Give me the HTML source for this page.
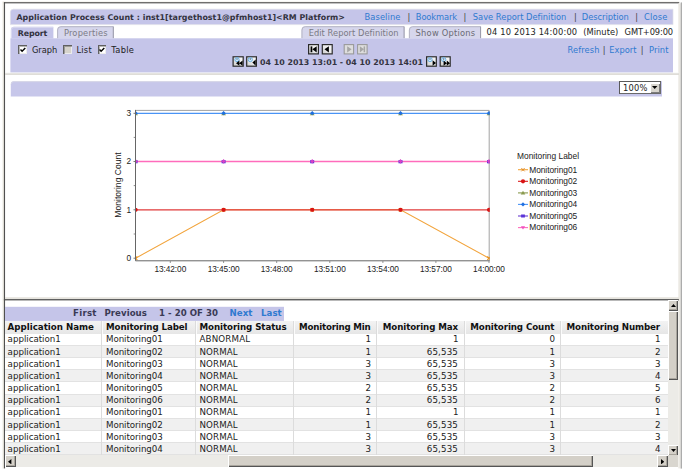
<!DOCTYPE html>
<html lang="en">
<head>
<meta charset="utf-8">
<title>Application Process Count</title>
<style>
html,body{margin:0;padding:0;background:#fff;}
body{width:685px;height:472px;position:relative;overflow:hidden;font-family:"DejaVu Sans","Liberation Sans",sans-serif;color:#222;}
.a{position:absolute;}
.t{position:absolute;white-space:pre;line-height:1em;color:#222;}
.c{font-family:"Liberation Sans",sans-serif;}
.lav{background:#c5c5e9;}
.tab{position:absolute;top:26px;height:12.3px;background:#d7d7ed;border-radius:4px 0 0 0;box-shadow:inset 0 1px 0 #b4b4c2, inset 1px 0 0 #e6e6f2, inset -1px 0 0 #9c9cab;}
.cb{position:absolute;top:45.2px;width:8.6px;height:8.6px;background:#fff;box-shadow:inset 1px 1px 0 #606060, inset 2px 2px 0 rgba(70,70,70,.4), inset -1px -1px 0 #ececec;}
.nb{position:absolute;width:9px;height:8.6px;border:1px solid #111;background:#f4f4f4;}
.nb.d{border-color:#8c8c8c;background:#dcdcdc;}
.ib{position:absolute;top:56px;width:9px;height:8.8px;border:1px solid #111;background:#eef1f4;}
.sb{background:#d4d0c8;position:absolute;box-shadow:inset 1px 1px 0 #fff, inset -1px -1px 0 #555, inset -2px -2px 0 #a9a59d;}
.trk{position:absolute;background:#ecebe7;}
</style>
</head>
<body>
<!-- frame chrome, separators, lavender blocks -->
<svg class="a" style="left:0;top:0" width="685" height="472" viewBox="0 0 685 472">
<rect x="2.5" y="1.6" width="2" height="467" fill="#eeebe4"/>
<rect x="2.5" y="1.6" width="677" height="1.2" fill="#eeebe4"/>
<rect x="3.9" y="2.2" width="1.15" height="466.2" fill="#505050"/>
<rect x="3.9" y="2.2" width="675.3" height="1.15" fill="#505050"/>
<rect x="678.3" y="3.4" width="2.4" height="465" fill="#ebe9e3"/>
<rect x="680.7" y="2.4" width="1.2" height="466.2" fill="#a4a4a4"/>
<!-- separators -->
<rect x="5" y="72.6" width="674" height="0.8" fill="#f6f5f2"/>
<rect x="5" y="73.3" width="674" height="1.6" fill="#dcdad4"/>
<rect x="5" y="297.2" width="674" height="1.9" fill="#e6e4de"/>
<rect x="3.9" y="299.1" width="675" height="1.3" fill="#505050"/>
<!-- title bar -->
<path d="M10.4 24.6V12.2Q10.4 9.2 13.4 9.2H673V24.6Z" fill="#c5c5e9" stroke="#e0e0ea" stroke-width=".7"/>
<!-- active tab -->
<path d="M10.9 38.6V29.8Q10.9 26.8 13.9 26.8H53.4V38.6Z" fill="#c5c5e9"/>
<path d="M11.4 38V29.8Q11.4 27.3 13.9 27.3H53" fill="none" stroke="#dcdcf0" stroke-width=".9"/>
<!-- inactive tabs -->
<g fill="#d6d6ec">
<path d="M57.1 38.3V30Q57.1 26.2 60.9 26.2H113.7V38.3Z"/>
<path d="M301.4 38.3V30Q301.4 26.2 305.2 26.2H404.5V38.3Z"/>
<path d="M408.9 38.3V30Q408.9 26.2 412.7 26.2H481V38.3Z"/>
</g>
<g fill="none" stroke-width="1">
<path d="M57.6 38.3V30Q57.6 26.7 60.9 26.7H113.2M302 38.3V30Q302 26.7 305.2 26.7H404M409.4 38.3V30Q409.4 26.7 412.7 26.7H480.5" stroke="#b6b6c4"/>
<path d="M113.3 26.6V38.3M404.1 26.6V38.3M480.6 26.6V38.3" stroke="#9898a6"/>
</g>
<!-- panel -->
<rect x="10.4" y="38.3" width="662.6" height="34.1" fill="#c5c5e9"/>
<!-- zoom bar -->
<path d="M10.8 96.4V84.2Q10.8 81.3 13.7 81.3H662V96.4Z" fill="#c7c7ea"/>
<path d="M11.2 84.2Q11.2 81.7 13.7 81.7H619" fill="none" stroke="#d8d8e4" stroke-width=".8"/>
<!-- pager bar -->
<rect x="5" y="306.8" width="279" height="14.1" fill="#c5c5e9"/>
</svg>

<!-- checkboxes -->
<div class="cb" style="left:18.2px;"><svg class="a" style="left:1.8px;top:1.8px" width="6" height="6" viewBox="0 0 6 6"><path d="M.5 2.5 L2.1 4.3 L5.3 .9" fill="none" stroke="#000" stroke-width="1.4"/></svg></div>
<div class="cb" style="left:63.4px;background:#d6d3cc;"></div>
<div class="cb" style="left:97.6px;"><svg class="a" style="left:1.8px;top:1.8px" width="6" height="6" viewBox="0 0 6 6"><path d="M.5 2.5 L2.1 4.3 L5.3 .9" fill="none" stroke="#000" stroke-width="1.4"/></svg></div>

<!-- nav buttons + time icons -->
<svg class="a" style="left:0;top:38px" width="685" height="34" viewBox="0 38 685 34">
<defs>
<linearGradient id="gb" x1="1" y1="0" x2="0" y2="1"><stop offset="0" stop-color="#fbfbfb"/><stop offset=".5" stop-color="#ececec"/><stop offset="1" stop-color="#c9c9c9"/></linearGradient>
</defs>
<g stroke="#2b2b2b" stroke-width="1.2" fill="url(#gb)">
<rect x="308.6" y="44.6" width="9.8" height="9.3"/>
<rect x="322.3" y="44.6" width="9.9" height="9.3"/>
</g>
<g stroke="#9a9a9a" stroke-width="1.1" fill="#dedede">
<rect x="344.2" y="44.6" width="9.4" height="9.3"/>
<rect x="357.6" y="44.6" width="9.5" height="9.3"/>
</g>
<g fill="#000">
<rect x="310.6" y="46.4" width="1.7" height="5.8"/><path d="M316.7 46.2L312.3 49.3L316.7 52.4Z"/>
<path d="M328.9 46.2L324.5 49.3L328.9 52.4Z"/>
</g>
<g fill="#a6a6a6">
<path d="M347.2 46.2L351.6 49.3L347.2 52.4Z"/>
<path d="M359.8 46.2L364 49.3L359.8 52.4Z"/><rect x="363.6" y="46.4" width="1.5" height="5.8"/>
</g>
<g stroke="#2b2b2b" stroke-width="1.2" fill="url(#gb)">
<rect x="233.1" y="56.8" width="10.1" height="9.4"/>
<rect x="246.7" y="56.8" width="9.7" height="9.4"/>
<rect x="426.6" y="56.8" width="9.7" height="9.4"/>
<rect x="440.2" y="56.8" width="10" height="9.4"/>
</g>
<g fill="#d4ecfb" stroke="#62aae2" stroke-width=".9">
<circle cx="237" cy="59.6" r="2.1"/>
<circle cx="250.3" cy="59.6" r="2.1"/>
<circle cx="430" cy="59.6" r="2.1"/>
<circle cx="443.7" cy="59.6" r="2.1"/>
</g>
<g stroke="#1c2a44" stroke-width=".7" fill="none">
<path d="M237 58.3v1.5M250.3 58.3v1.5M430 58.3v1.5M443.7 58.3v1.5"/>
</g>
<g fill="#000">
<path d="M239.4 60.6L236 63.2L239.4 65.7ZM242.6 60.6L239.2 63.2L242.6 65.7Z"/>
<path d="M255.7 59.4L252.4 62.5L255.7 65.7Z"/>
<path d="M432.6 60.2L436 63L432.6 65.8Z"/>
<path d="M443.6 60.6L446.9 63.2L443.6 65.7ZM446.8 60.6L450 63.2L446.8 65.7Z"/>
</g>
</svg>

<!-- zoom bar -->
<div class="a" style="left:619.2px;top:81.3px;width:41.8px;height:12.8px;background:#fff;box-shadow:inset 1px 1px 0 #5a5a5a, inset -1px -1px 0 #6a6a6a;"></div>
<div class="a" style="left:650.3px;top:82.6px;width:9.7px;height:10.4px;background:#d8d5ce;box-shadow:inset 1px 1px 0 #fff, inset -1px -1px 0 #7c7c7c;"><svg class="a" style="left:2.2px;top:3.6px" width="5.4" height="3" viewBox="0 0 5.4 3"><path d="M0 0H5.4L2.7 3Z" fill="#000"/></svg></div>

<svg class="a" style="left:0;top:97px" width="685" height="199" viewBox="0 97 685 199">
<defs><clipPath id="pc"><rect x="135.5" y="110.4" width="354.3" height="150.4"/></clipPath></defs>
<path d="M135.5 110.4 H489.2 V260.8" fill="none" stroke="#a2a2a2" stroke-width="1"/>
<g clip-path="url(#pc)">
<polyline points="135.6,258.2 223.6,209.8 312.2,209.8 400.5,209.8 489.0,258.2" fill="none" stroke="#f2a43c" stroke-width="1.05"/>
<polyline points="135.6,209.8 223.6,209.8 312.2,209.8 400.5,209.8 489.0,209.8" fill="none" stroke="#e03a3a" stroke-width="1.2"/>
<polyline points="135.6,113.3 223.6,113.3 312.2,113.3 400.5,113.3 489.0,113.3" fill="none" stroke="#4a94f6" stroke-width="1.35"/>
<polyline points="135.6,161.5 223.6,161.5 312.2,161.5 400.5,161.5 489.0,161.5" fill="none" stroke="#ff6cbc" stroke-width="1.3"/>
<path d="M133.9 256.5l3.4 3.4m0 -3.4l-3.4 3.4" stroke="#e8901c" stroke-width="1.1" fill="none"/>
<circle cx="135.6" cy="209.8" r="2.1" fill="#d81414"/>
<path d="M135.6 111.5l2.4 3.8h-4.8z" fill="#8a9a4e"/>
<path d="M135.6 110.9l2.2 2.3l-2.2 2.1l-2.2 -2.1z" fill="#1f6fe0"/>
<rect x="133.6" y="160.1" width="4" height="3.2" fill="#5a34d8"/>
<path d="M133.7 161.3l1.9 2.4l1.9 -2.4l-1.9 -2.4z" fill="#d640c8"/>
<path d="M221.9 208.1l3.4 3.4m0 -3.4l-3.4 3.4" stroke="#e8901c" stroke-width="1.1" fill="none"/>
<circle cx="223.6" cy="209.8" r="2.1" fill="#d81414"/>
<path d="M223.6 111.5l2.4 3.8h-4.8z" fill="#8a9a4e"/>
<path d="M223.6 110.9l2.2 2.3l-2.2 2.1l-2.2 -2.1z" fill="#1f6fe0"/>
<rect x="221.6" y="160.1" width="4" height="3.2" fill="#5a34d8"/>
<path d="M221.7 161.3l1.9 2.4l1.9 -2.4l-1.9 -2.4z" fill="#d640c8"/>
<path d="M310.5 208.1l3.4 3.4m0 -3.4l-3.4 3.4" stroke="#e8901c" stroke-width="1.1" fill="none"/>
<circle cx="312.2" cy="209.8" r="2.1" fill="#d81414"/>
<path d="M312.2 111.5l2.4 3.8h-4.8z" fill="#8a9a4e"/>
<path d="M312.2 110.9l2.2 2.3l-2.2 2.1l-2.2 -2.1z" fill="#1f6fe0"/>
<rect x="310.2" y="160.1" width="4" height="3.2" fill="#5a34d8"/>
<path d="M310.3 161.3l1.9 2.4l1.9 -2.4l-1.9 -2.4z" fill="#d640c8"/>
<path d="M398.8 208.1l3.4 3.4m0 -3.4l-3.4 3.4" stroke="#e8901c" stroke-width="1.1" fill="none"/>
<circle cx="400.5" cy="209.8" r="2.1" fill="#d81414"/>
<path d="M400.5 111.5l2.4 3.8h-4.8z" fill="#8a9a4e"/>
<path d="M400.5 110.9l2.2 2.3l-2.2 2.1l-2.2 -2.1z" fill="#1f6fe0"/>
<rect x="398.5" y="160.1" width="4" height="3.2" fill="#5a34d8"/>
<path d="M398.6 161.3l1.9 2.4l1.9 -2.4l-1.9 -2.4z" fill="#d640c8"/>
<path d="M487.3 256.5l3.4 3.4m0 -3.4l-3.4 3.4" stroke="#e8901c" stroke-width="1.1" fill="none"/>
<circle cx="489.0" cy="209.8" r="2.1" fill="#d81414"/>
<path d="M489.0 111.5l2.4 3.8h-4.8z" fill="#8a9a4e"/>
<path d="M489.0 110.9l2.2 2.3l-2.2 2.1l-2.2 -2.1z" fill="#1f6fe0"/>
<rect x="487.0" y="160.1" width="4" height="3.2" fill="#5a34d8"/>
<path d="M487.1 161.3l1.9 2.4l1.9 -2.4l-1.9 -2.4z" fill="#d640c8"/>
</g>
<path d="M135.5 109.9 V260.8 H489.7" fill="none" stroke="#666" stroke-width="1"/>
<path d="M135.1 258.2h-1.6" stroke="#7a7a7a" stroke-width="1"/>
<path d="M135.1 209.8h-1.6" stroke="#7a7a7a" stroke-width="1"/>
<path d="M135.1 161.5h-1.6" stroke="#7a7a7a" stroke-width="1"/>
<path d="M135.1 113.3h-1.6" stroke="#7a7a7a" stroke-width="1"/>
<path d="M135.1 137.4h-1.4" stroke="#8a8a8a" stroke-width="1"/>
<path d="M135.1 185.6h-1.4" stroke="#8a8a8a" stroke-width="1"/>
<path d="M135.1 234.0h-1.4" stroke="#8a8a8a" stroke-width="1"/>
<path d="M170.3 261.2v1.6" stroke="#7a7a7a" stroke-width="1"/>
<path d="M223.6 261.2v1.6" stroke="#7a7a7a" stroke-width="1"/>
<path d="M276.7 261.2v1.6" stroke="#7a7a7a" stroke-width="1"/>
<path d="M329.8 261.2v1.6" stroke="#7a7a7a" stroke-width="1"/>
<path d="M382.9 261.2v1.6" stroke="#7a7a7a" stroke-width="1"/>
<path d="M435.9 261.2v1.6" stroke="#7a7a7a" stroke-width="1"/>
<path d="M489.0 261.2v1.6" stroke="#7a7a7a" stroke-width="1"/>
<path d="M518 169.7h10" stroke="#f2a43c" stroke-width="1.1"/>
<path d="M518 181.3h10" stroke="#dc1c1c" stroke-width="1.1"/>
<path d="M518 192.9h10" stroke="#8a9a4e" stroke-width="1.1"/>
<path d="M518 204.4h10" stroke="#4a94f6" stroke-width="1.1"/>
<path d="M518 216.0h10" stroke="#6a3cd0" stroke-width="1.1"/>
<path d="M518 227.6h10" stroke="#ff6cbc" stroke-width="1.1"/>
<path d="M521.4 168.1l3.2 3.2m0 -3.2l-3.2 3.2" stroke="#e08a20" stroke-width="1" fill="none"/>
<circle cx="523" cy="181.3" r="2.1" fill="#d81414"/>
<path d="M523 190.8l2.3 3.6h-4.6z" fill="#8a9a4e"/>
<path d="M523 202.3l2.1 2.1l-2.1 2.1l-2.1 -2.1z" fill="#1f6fe0"/>
<rect x="521.1" y="214.5" width="3.8" height="3" fill="#5a34d8"/>
<path d="M520.9 226.2h4.2l-2.1 3.2z" fill="#f050c0"/>
</svg>
<span class="t c" style="left:118.4px;top:185.3px;font-size:8.5px;letter-spacing:0.035px;transform:translate(-50%,-50%) rotate(-90deg);">Monitoring Count</span>


<div class="a" style="left:5px;top:321px;width:662.6px;height:12.7px;background:linear-gradient(#f3f3f3,#e6e6e6);"></div>
<div class="a" style="left:5px;top:333.70px;width:662.6px;height:12.17px;background:#fff;box-shadow:inset 0 -1px 0 #e2e2e2;"></div>
<div class="a" style="left:5px;top:345.87px;width:662.6px;height:12.17px;background:#f0f0f0;box-shadow:inset 0 -1px 0 #e2e2e2;"></div>
<div class="a" style="left:5px;top:358.04px;width:662.6px;height:12.17px;background:#fff;box-shadow:inset 0 -1px 0 #e2e2e2;"></div>
<div class="a" style="left:5px;top:370.21px;width:662.6px;height:12.17px;background:#f0f0f0;box-shadow:inset 0 -1px 0 #e2e2e2;"></div>
<div class="a" style="left:5px;top:382.38px;width:662.6px;height:12.17px;background:#fff;box-shadow:inset 0 -1px 0 #e2e2e2;"></div>
<div class="a" style="left:5px;top:394.55px;width:662.6px;height:12.17px;background:#f0f0f0;box-shadow:inset 0 -1px 0 #e2e2e2;"></div>
<div class="a" style="left:5px;top:406.72px;width:662.6px;height:12.17px;background:#fff;box-shadow:inset 0 -1px 0 #e2e2e2;"></div>
<div class="a" style="left:5px;top:418.89px;width:662.6px;height:12.17px;background:#f0f0f0;box-shadow:inset 0 -1px 0 #e2e2e2;"></div>
<div class="a" style="left:5px;top:431.06px;width:662.6px;height:12.17px;background:#fff;box-shadow:inset 0 -1px 0 #e2e2e2;"></div>
<div class="a" style="left:5px;top:443.23px;width:662.6px;height:12.17px;background:#f0f0f0;box-shadow:inset 0 -1px 0 #e2e2e2;"></div>
<div class="a" style="left:101.1px;top:321px;width:1px;height:134.4px;background:#dcdcdc;"></div>
<div class="a" style="left:102.1px;top:321px;width:1px;height:12.7px;background:#fbfbfb;"></div>
<div class="a" style="left:194.5px;top:321px;width:1px;height:134.4px;background:#dcdcdc;"></div>
<div class="a" style="left:195.5px;top:321px;width:1px;height:12.7px;background:#fbfbfb;"></div>
<div class="a" style="left:292.5px;top:321px;width:1px;height:134.4px;background:#dcdcdc;"></div>
<div class="a" style="left:293.5px;top:321px;width:1px;height:12.7px;background:#fbfbfb;"></div>
<div class="a" style="left:376.1px;top:321px;width:1px;height:134.4px;background:#dcdcdc;"></div>
<div class="a" style="left:377.1px;top:321px;width:1px;height:12.7px;background:#fbfbfb;"></div>
<div class="a" style="left:463.5px;top:321px;width:1px;height:134.4px;background:#dcdcdc;"></div>
<div class="a" style="left:464.5px;top:321px;width:1px;height:12.7px;background:#fbfbfb;"></div>
<div class="a" style="left:560.0px;top:321px;width:1px;height:134.4px;background:#dcdcdc;"></div>
<div class="a" style="left:561.0px;top:321px;width:1px;height:12.7px;background:#fbfbfb;"></div>

<!-- vertical scrollbar -->
<div class="trk" style="left:667.6px;top:300.4px;width:10.8px;height:155.2px;"></div>
<div class="sb" style="left:667.6px;top:300.4px;width:10.8px;height:10.2px;"><svg class="a" style="left:3px;top:3.6px" width="5" height="3" viewBox="0 0 5 3"><path d="M0 3H5L2.5 0Z" fill="#000"/></svg></div>
<div class="sb" style="left:667.6px;top:310.8px;width:10.8px;height:69.2px;"></div>
<div class="sb" style="left:667.6px;top:445.2px;width:10.8px;height:10.4px;"><svg class="a" style="left:3px;top:3.8px" width="5" height="3" viewBox="0 0 5 3"><path d="M0 0H5L2.5 3Z" fill="#000"/></svg></div>
<!-- horizontal scrollbar -->
<div class="trk" style="left:5px;top:455.4px;width:662.6px;height:12px;"></div>
<div class="a" style="left:667.6px;top:455.4px;width:10.8px;height:12px;background:#d9d6cf;"></div>
<div class="sb" style="left:5px;top:455.4px;width:10.8px;height:12px;"><svg class="a" style="left:3.4px;top:3.2px" width="3.4" height="5.4" viewBox="0 0 3.4 5.4"><path d="M3.4 0V5.4L0 2.7Z" fill="#000"/></svg></div>
<div class="sb" style="left:228.3px;top:455.4px;width:364.7px;height:12px;"></div>
<div class="sb" style="left:656.8px;top:455.4px;width:10.8px;height:12px;"><svg class="a" style="left:4px;top:3.2px" width="3.4" height="5.4" viewBox="0 0 3.4 5.4"><path d="M0 0V5.4L3.4 2.7Z" fill="#000"/></svg></div>

<span class="t" style="left:16.40px;top:13.52px;font-size:7.9px;font-weight:bold;color:#33333f;letter-spacing:0.037px;">Application Process Count : inst1[targethost1@pfmhost1]&lt;RM Platform&gt;</span>
<span class="t" style="left:364.50px;top:12.98px;font-size:8.3px;color:#2f7ad0;letter-spacing:0.102px;">Baseline</span>
<span class="t" style="left:407.50px;top:12.98px;font-size:8.3px;color:#444;">|</span>
<span class="t" style="left:415.80px;top:12.98px;font-size:8.3px;color:#2f7ad0;letter-spacing:-0.106px;">Bookmark</span>
<span class="t" style="left:463.50px;top:12.98px;font-size:8.3px;color:#444;">|</span>
<span class="t" style="left:472.80px;top:12.98px;font-size:8.3px;color:#2f7ad0;letter-spacing:0.012px;">Save Report Definition</span>
<span class="t" style="left:574.00px;top:12.98px;font-size:8.3px;color:#444;">|</span>
<span class="t" style="left:581.80px;top:12.98px;font-size:8.3px;color:#2f7ad0;letter-spacing:-0.033px;">Description</span>
<span class="t" style="left:635.20px;top:12.98px;font-size:8.3px;color:#444;">|</span>
<span class="t" style="left:644.00px;top:12.98px;font-size:8.3px;color:#2f7ad0;letter-spacing:0.198px;">Close</span>
<span class="t" style="left:17.70px;top:30.22px;font-size:7.9px;font-weight:bold;color:#33333f;letter-spacing:-0.095px;">Report</span>
<span class="t" style="left:63.90px;top:28.68px;font-size:8.3px;color:#7c7c86;letter-spacing:0.196px;">Properties</span>
<span class="t" style="left:308.70px;top:28.68px;font-size:8.3px;color:#7a7a84;letter-spacing:0.039px;">Edit Report Definition</span>
<span class="t" style="left:415.60px;top:28.68px;font-size:8.3px;color:#6a6a74;letter-spacing:0.229px;">Show Options</span>
<span class="t" style="left:486.60px;top:28.18px;font-size:8.3px;letter-spacing:0.173px;">04 10 2013 14:00:00</span>
<span class="t" style="left:583.30px;top:28.18px;font-size:8.3px;letter-spacing:0.023px;">(Minute)</span>
<span class="t" style="left:624.60px;top:28.18px;font-size:8.3px;letter-spacing:-0.126px;">GMT+09:00</span>
<span class="t" style="left:32.00px;top:45.58px;font-size:8.3px;letter-spacing:-0.071px;">Graph</span>
<span class="t" style="left:76.50px;top:45.58px;font-size:8.3px;letter-spacing:0.221px;">List</span>
<span class="t" style="left:111.30px;top:45.58px;font-size:8.3px;letter-spacing:0.286px;">Table</span>
<span class="t" style="left:567.40px;top:45.88px;font-size:8.3px;color:#2f7ad0;letter-spacing:0.137px;">Refresh</span>
<span class="t" style="left:602.80px;top:45.88px;font-size:8.3px;color:#444;">|</span>
<span class="t" style="left:609.30px;top:45.88px;font-size:8.3px;color:#2f7ad0;letter-spacing:0.005px;">Export</span>
<span class="t" style="left:640.80px;top:45.88px;font-size:8.3px;color:#444;">|</span>
<span class="t" style="left:649.10px;top:45.88px;font-size:8.3px;color:#2f7ad0;letter-spacing:0.061px;">Print</span>
<span class="t" style="left:260.00px;top:58.62px;font-size:7.9px;font-weight:bold;color:#33333f;letter-spacing:-0.010px;">04 10 2013 13:01 - 04 10 2013 14:01</span>
<span class="t" style="left:623.10px;top:84.28px;font-size:8.3px;letter-spacing:0.216px;">100%</span>
<span class="t" style="left:73.00px;top:309.32px;font-size:8.6px;font-weight:bold;color:#3a3a55;letter-spacing:0.284px;">First</span>
<span class="t" style="left:104.40px;top:309.32px;font-size:8.6px;font-weight:bold;color:#3a3a55;letter-spacing:0.067px;">Previous</span>
<span class="t" style="left:159.00px;top:309.32px;font-size:8.6px;font-weight:bold;color:#3a3a55;letter-spacing:0.033px;">1 - 20 OF 30</span>
<span class="t" style="left:229.50px;top:309.32px;font-size:8.6px;font-weight:bold;color:#2f7ad0;letter-spacing:0.103px;">Next</span>
<span class="t" style="left:261.00px;top:309.32px;font-size:8.6px;font-weight:bold;color:#2f7ad0;letter-spacing:0.050px;">Last</span>
<span class="t" style="left:7.60px;top:322.74px;font-size:8.7px;font-weight:bold;color:#111;letter-spacing:-0.007px;">Application Name</span>
<span class="t" style="left:106.00px;top:322.74px;font-size:8.7px;font-weight:bold;color:#111;letter-spacing:-0.099px;">Monitoring Label</span>
<span class="t" style="left:199.50px;top:322.74px;font-size:8.7px;font-weight:bold;color:#111;letter-spacing:-0.081px;">Monitoring Status</span>
<span class="t" style="left:299.00px;top:322.74px;font-size:8.7px;font-weight:bold;color:#111;letter-spacing:-0.208px;">Monitoring Min</span>
<span class="t" style="left:382.80px;top:322.74px;font-size:8.7px;font-weight:bold;color:#111;letter-spacing:-0.107px;">Monitoring Max</span>
<span class="t" style="left:470.30px;top:322.74px;font-size:8.7px;font-weight:bold;color:#111;letter-spacing:-0.086px;">Monitoring Count</span>
<span class="t" style="left:566.60px;top:322.74px;font-size:8.7px;font-weight:bold;color:#111;letter-spacing:-0.124px;">Monitoring Number</span>
<span class="t" style="left:7.60px;top:335.34px;font-size:8.7px;letter-spacing:-0.021px;">application1</span>
<span class="t" style="left:106.00px;top:335.34px;font-size:8.7px;letter-spacing:-0.068px;">Monitoring01</span>
<span class="t" style="left:199.50px;top:335.34px;font-size:8.7px;letter-spacing:0.155px;">ABNORMAL</span>
<span class="t" style="left:365.50px;top:335.34px;font-size:8.7px;">1</span>
<span class="t" style="left:453.00px;top:335.34px;font-size:8.7px;">1</span>
<span class="t" style="left:549.40px;top:335.34px;font-size:8.7px;">0</span>
<span class="t" style="left:655.00px;top:335.34px;font-size:8.7px;">1</span>
<span class="t" style="left:7.60px;top:347.51px;font-size:8.7px;letter-spacing:-0.021px;">application1</span>
<span class="t" style="left:106.00px;top:347.51px;font-size:8.7px;letter-spacing:-0.068px;">Monitoring02</span>
<span class="t" style="left:199.50px;top:347.51px;font-size:8.7px;letter-spacing:0.107px;">NORMAL</span>
<span class="t" style="left:365.50px;top:347.51px;font-size:8.7px;">1</span>
<span class="t" style="left:426.80px;top:347.51px;font-size:8.7px;letter-spacing:0.132px;">65,535</span>
<span class="t" style="left:549.40px;top:347.51px;font-size:8.7px;">1</span>
<span class="t" style="left:655.00px;top:347.51px;font-size:8.7px;">2</span>
<span class="t" style="left:7.60px;top:359.68px;font-size:8.7px;letter-spacing:-0.021px;">application1</span>
<span class="t" style="left:106.00px;top:359.68px;font-size:8.7px;letter-spacing:-0.068px;">Monitoring03</span>
<span class="t" style="left:199.50px;top:359.68px;font-size:8.7px;letter-spacing:0.107px;">NORMAL</span>
<span class="t" style="left:365.50px;top:359.68px;font-size:8.7px;">3</span>
<span class="t" style="left:426.80px;top:359.68px;font-size:8.7px;letter-spacing:0.132px;">65,535</span>
<span class="t" style="left:549.40px;top:359.68px;font-size:8.7px;">3</span>
<span class="t" style="left:655.00px;top:359.68px;font-size:8.7px;">3</span>
<span class="t" style="left:7.60px;top:371.85px;font-size:8.7px;letter-spacing:-0.021px;">application1</span>
<span class="t" style="left:106.00px;top:371.85px;font-size:8.7px;letter-spacing:-0.068px;">Monitoring04</span>
<span class="t" style="left:199.50px;top:371.85px;font-size:8.7px;letter-spacing:0.107px;">NORMAL</span>
<span class="t" style="left:365.50px;top:371.85px;font-size:8.7px;">3</span>
<span class="t" style="left:426.80px;top:371.85px;font-size:8.7px;letter-spacing:0.132px;">65,535</span>
<span class="t" style="left:549.40px;top:371.85px;font-size:8.7px;">3</span>
<span class="t" style="left:655.00px;top:371.85px;font-size:8.7px;">4</span>
<span class="t" style="left:7.60px;top:384.02px;font-size:8.7px;letter-spacing:-0.021px;">application1</span>
<span class="t" style="left:106.00px;top:384.02px;font-size:8.7px;letter-spacing:-0.068px;">Monitoring05</span>
<span class="t" style="left:199.50px;top:384.02px;font-size:8.7px;letter-spacing:0.107px;">NORMAL</span>
<span class="t" style="left:365.50px;top:384.02px;font-size:8.7px;">2</span>
<span class="t" style="left:426.80px;top:384.02px;font-size:8.7px;letter-spacing:0.132px;">65,535</span>
<span class="t" style="left:549.40px;top:384.02px;font-size:8.7px;">2</span>
<span class="t" style="left:655.00px;top:384.02px;font-size:8.7px;">5</span>
<span class="t" style="left:7.60px;top:396.19px;font-size:8.7px;letter-spacing:-0.021px;">application1</span>
<span class="t" style="left:106.00px;top:396.19px;font-size:8.7px;letter-spacing:-0.068px;">Monitoring06</span>
<span class="t" style="left:199.50px;top:396.19px;font-size:8.7px;letter-spacing:0.107px;">NORMAL</span>
<span class="t" style="left:365.50px;top:396.19px;font-size:8.7px;">2</span>
<span class="t" style="left:426.80px;top:396.19px;font-size:8.7px;letter-spacing:0.132px;">65,535</span>
<span class="t" style="left:549.40px;top:396.19px;font-size:8.7px;">2</span>
<span class="t" style="left:655.00px;top:396.19px;font-size:8.7px;">6</span>
<span class="t" style="left:7.60px;top:408.36px;font-size:8.7px;letter-spacing:-0.021px;">application1</span>
<span class="t" style="left:106.00px;top:408.36px;font-size:8.7px;letter-spacing:-0.068px;">Monitoring01</span>
<span class="t" style="left:199.50px;top:408.36px;font-size:8.7px;letter-spacing:0.107px;">NORMAL</span>
<span class="t" style="left:365.50px;top:408.36px;font-size:8.7px;">1</span>
<span class="t" style="left:453.00px;top:408.36px;font-size:8.7px;">1</span>
<span class="t" style="left:549.40px;top:408.36px;font-size:8.7px;">1</span>
<span class="t" style="left:655.00px;top:408.36px;font-size:8.7px;">1</span>
<span class="t" style="left:7.60px;top:420.53px;font-size:8.7px;letter-spacing:-0.021px;">application1</span>
<span class="t" style="left:106.00px;top:420.53px;font-size:8.7px;letter-spacing:-0.068px;">Monitoring02</span>
<span class="t" style="left:199.50px;top:420.53px;font-size:8.7px;letter-spacing:0.107px;">NORMAL</span>
<span class="t" style="left:365.50px;top:420.53px;font-size:8.7px;">1</span>
<span class="t" style="left:426.80px;top:420.53px;font-size:8.7px;letter-spacing:0.132px;">65,535</span>
<span class="t" style="left:549.40px;top:420.53px;font-size:8.7px;">1</span>
<span class="t" style="left:655.00px;top:420.53px;font-size:8.7px;">2</span>
<span class="t" style="left:7.60px;top:432.70px;font-size:8.7px;letter-spacing:-0.021px;">application1</span>
<span class="t" style="left:106.00px;top:432.70px;font-size:8.7px;letter-spacing:-0.068px;">Monitoring03</span>
<span class="t" style="left:199.50px;top:432.70px;font-size:8.7px;letter-spacing:0.107px;">NORMAL</span>
<span class="t" style="left:365.50px;top:432.70px;font-size:8.7px;">3</span>
<span class="t" style="left:426.80px;top:432.70px;font-size:8.7px;letter-spacing:0.132px;">65,535</span>
<span class="t" style="left:549.40px;top:432.70px;font-size:8.7px;">3</span>
<span class="t" style="left:655.00px;top:432.70px;font-size:8.7px;">3</span>
<span class="t" style="left:7.60px;top:444.87px;font-size:8.7px;letter-spacing:-0.021px;">application1</span>
<span class="t" style="left:106.00px;top:444.87px;font-size:8.7px;letter-spacing:-0.068px;">Monitoring04</span>
<span class="t" style="left:199.50px;top:444.87px;font-size:8.7px;letter-spacing:0.107px;">NORMAL</span>
<span class="t" style="left:365.50px;top:444.87px;font-size:8.7px;">3</span>
<span class="t" style="left:426.80px;top:444.87px;font-size:8.7px;letter-spacing:0.132px;">65,535</span>
<span class="t" style="left:549.40px;top:444.87px;font-size:8.7px;">3</span>
<span class="t" style="left:655.00px;top:444.87px;font-size:8.7px;">4</span>
<span class="t c" style="left:126.60px;top:109.28px;font-size:8.3px;">3</span>
<span class="t c" style="left:126.60px;top:157.48px;font-size:8.3px;">2</span>
<span class="t c" style="left:126.60px;top:205.78px;font-size:8.3px;">1</span>
<span class="t c" style="left:126.60px;top:254.18px;font-size:8.3px;">0</span>
<span class="t c" style="left:154.40px;top:265.08px;font-size:8.3px;letter-spacing:-0.062px;">13:42:00</span>
<span class="t c" style="left:207.70px;top:265.08px;font-size:8.3px;letter-spacing:-0.062px;">13:45:00</span>
<span class="t c" style="left:260.80px;top:265.08px;font-size:8.3px;letter-spacing:-0.062px;">13:48:00</span>
<span class="t c" style="left:313.90px;top:265.08px;font-size:8.3px;letter-spacing:-0.062px;">13:51:00</span>
<span class="t c" style="left:367.00px;top:265.08px;font-size:8.3px;letter-spacing:-0.062px;">13:54:00</span>
<span class="t c" style="left:420.00px;top:265.08px;font-size:8.3px;letter-spacing:-0.062px;">13:57:00</span>
<span class="t c" style="left:473.10px;top:265.08px;font-size:8.3px;letter-spacing:-0.062px;">14:00:00</span>
<span class="t c" style="left:517.00px;top:151.69px;font-size:8.4px;letter-spacing:0.005px;">Monitoring Label</span>
<span class="t c" style="left:529.20px;top:165.59px;font-size:8.4px;letter-spacing:-0.035px;">Monitoring01</span>
<span class="t c" style="left:529.20px;top:177.17px;font-size:8.4px;letter-spacing:-0.035px;">Monitoring02</span>
<span class="t c" style="left:529.20px;top:188.75px;font-size:8.4px;letter-spacing:-0.035px;">Monitoring03</span>
<span class="t c" style="left:529.20px;top:200.33px;font-size:8.4px;letter-spacing:-0.035px;">Monitoring04</span>
<span class="t c" style="left:529.20px;top:211.91px;font-size:8.4px;letter-spacing:-0.035px;">Monitoring05</span>
<span class="t c" style="left:529.20px;top:223.49px;font-size:8.4px;letter-spacing:-0.035px;">Monitoring06</span>
</body>
</html>
